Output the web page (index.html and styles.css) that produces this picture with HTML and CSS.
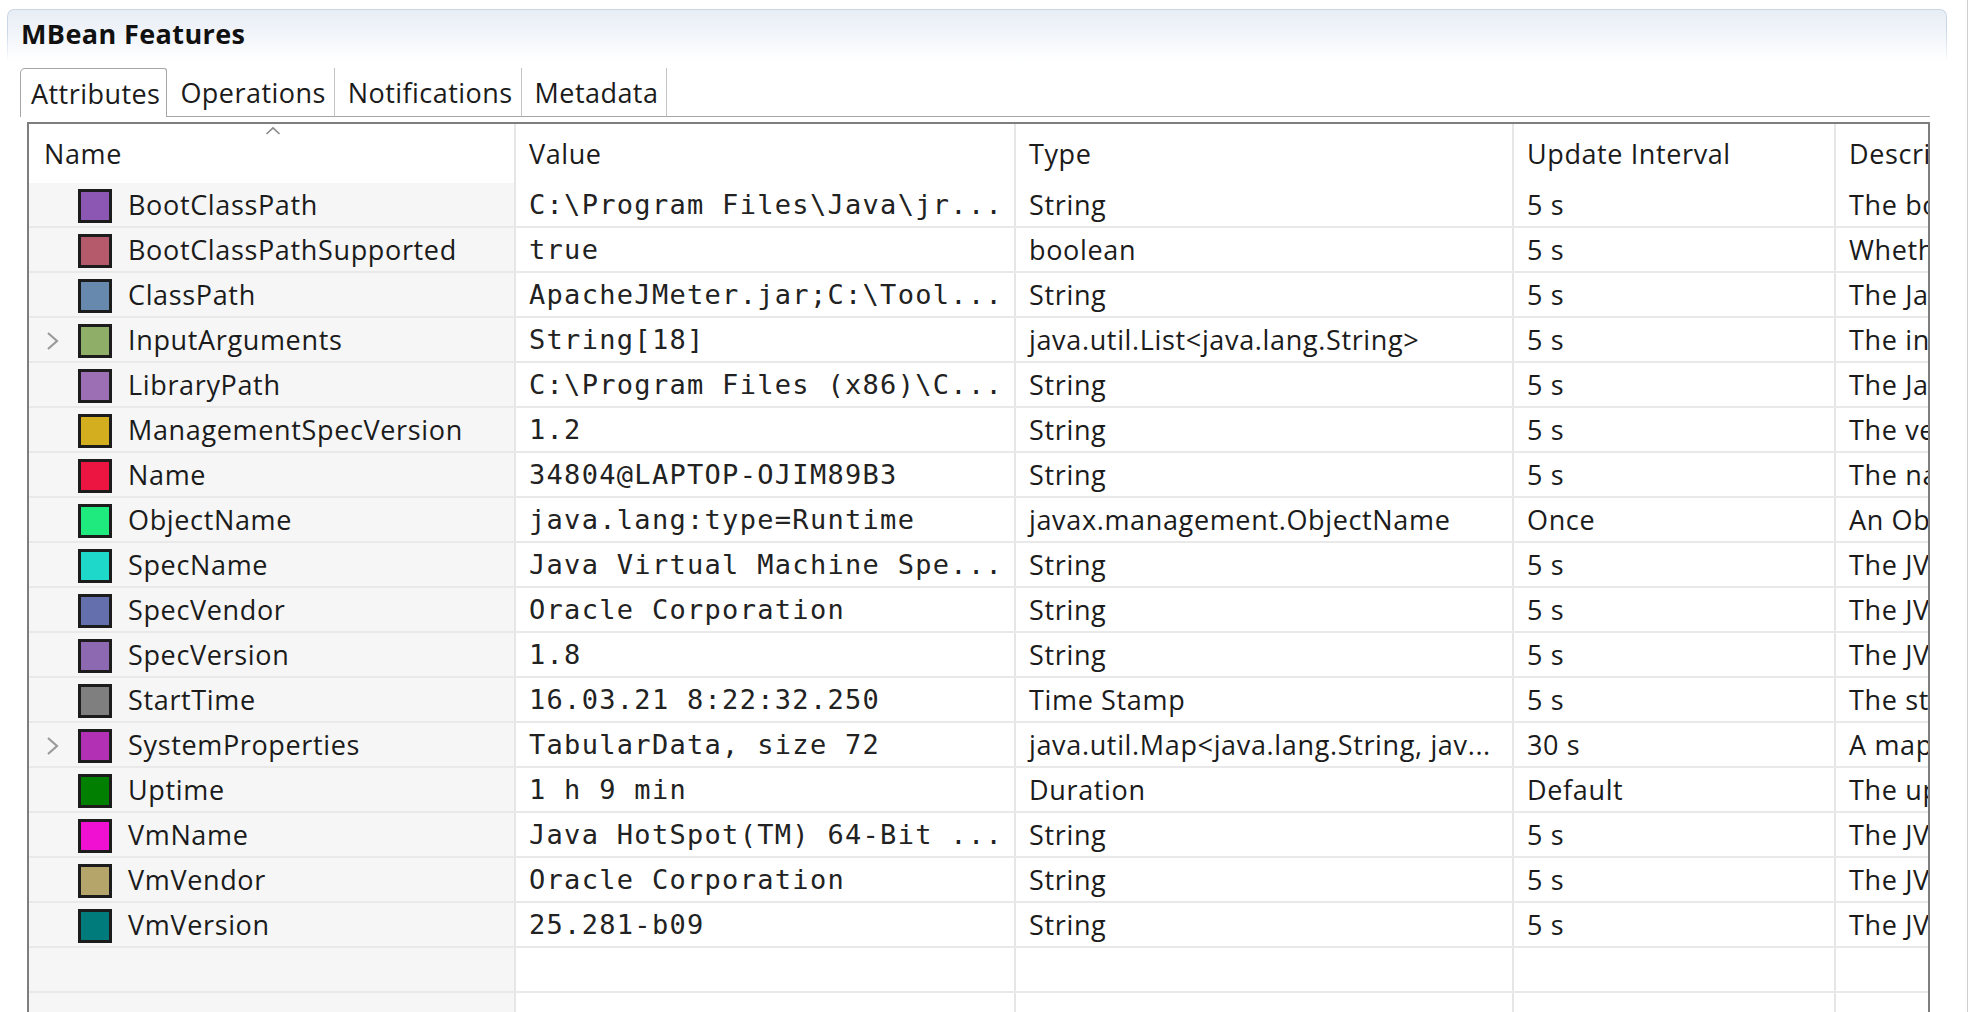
FILE: index.html
```html
<!DOCTYPE html>
<html>
<head>
<meta charset="utf-8">
<link rel="stylesheet" href="styles.css">
</head>
<body>
<div class="window">
  <div class="panel">
    <div class="panel-head"><span class="panel-title">MBean Features</span></div>
    <div class="tabs">
      <div class="tab tab-active">Attributes</div>
      <div class="tab">Operations</div>
      <div class="tab">Notifications</div>
      <div class="tab">Metadata</div>
      <div class="tab-fill"></div>
    </div>
    <div class="grid-wrap">
      <table class="grid">
        <colgroup>
          <col class="c-name"><col class="c-value"><col class="c-type"><col class="c-upd"><col class="c-desc">
        </colgroup>
        <thead>
          <tr>
            <th class="h-name">Name<svg class="sort" width="16" height="9" viewBox="0 0 16 9"><path d="M1.5 8 L8 1.8 L14.5 8" fill="none" stroke="#8a8a8a" stroke-width="1.6"/></svg></th>
            <th>Value</th>
            <th>Type</th>
            <th>Update Interval</th>
            <th>Description</th>
          </tr>
        </thead>
        <tbody>
          <tr><td class="n"><span class="exp"></span><span class="sw" style="background:#8b57b2"></span>BootClassPath</td><td class="v">C:\Program Files\Java\jr...</td><td>String</td><td>5 s</td><td>The boot class path that is used by the bootstrap class loader</td></tr>
          <tr><td class="n"><span class="exp"></span><span class="sw" style="background:#b45a6b"></span>BootClassPathSupported</td><td class="v">true</td><td>boolean</td><td>5 s</td><td>Whether the Java virtual machine supports the boot class path</td></tr>
          <tr><td class="n"><span class="exp"></span><span class="sw" style="background:#6889ae"></span>ClassPath</td><td class="v">ApacheJMeter.jar;C:\Tool...</td><td>String</td><td>5 s</td><td>The Java class path</td></tr>
          <tr><td class="n"><span class="exp"><svg width="14" height="22" viewBox="0 0 14 22"><path d="M2 3 L11 11 L2 19" fill="none" stroke="#9a9a9a" stroke-width="2.2"/></svg></span><span class="sw" style="background:#8fae67"></span>InputArguments</td><td class="v">String[18]</td><td>java.util.List&lt;java.lang.String&gt;</td><td>5 s</td><td>The input arguments passed to the JVM</td></tr>
          <tr><td class="n"><span class="exp"></span><span class="sw" style="background:#9c6fb5"></span>LibraryPath</td><td class="v">C:\Program Files (x86)\C...</td><td>String</td><td>5 s</td><td>The Java library path</td></tr>
          <tr><td class="n"><span class="exp"></span><span class="sw" style="background:#d3ae1f"></span>ManagementSpecVersion</td><td class="v">1.2</td><td>String</td><td>5 s</td><td>The version of the management interface</td></tr>
          <tr><td class="n"><span class="exp"></span><span class="sw" style="background:#ec1440"></span>Name</td><td class="v">34804@LAPTOP-OJIM89B3</td><td>String</td><td>5 s</td><td>The name representing the running JVM</td></tr>
          <tr><td class="n"><span class="exp"></span><span class="sw" style="background:#1eea7e"></span>ObjectName</td><td class="v">java.lang:type=Runtime</td><td>javax.management.ObjectName</td><td>Once</td><td>An ObjectName for this MBean</td></tr>
          <tr><td class="n"><span class="exp"></span><span class="sw" style="background:#1ed9c9"></span>SpecName</td><td class="v">Java Virtual Machine Spe...</td><td>String</td><td>5 s</td><td>The JVM specification name</td></tr>
          <tr><td class="n"><span class="exp"></span><span class="sw" style="background:#6470ae"></span>SpecVendor</td><td class="v">Oracle Corporation</td><td>String</td><td>5 s</td><td>The JVM specification vendor</td></tr>
          <tr><td class="n"><span class="exp"></span><span class="sw" style="background:#8c69b0"></span>SpecVersion</td><td class="v">1.8</td><td>String</td><td>5 s</td><td>The JVM specification version</td></tr>
          <tr><td class="n"><span class="exp"></span><span class="sw" style="background:#7f7f7f"></span>StartTime</td><td class="v">16.03.21 8:22:32.250</td><td>Time Stamp</td><td>5 s</td><td>The start time of the JVM</td></tr>
          <tr><td class="n"><span class="exp"><svg width="14" height="22" viewBox="0 0 14 22"><path d="M2 3 L11 11 L2 19" fill="none" stroke="#9a9a9a" stroke-width="2.2"/></svg></span><span class="sw" style="background:#b130b3"></span>SystemProperties</td><td class="v">TabularData, size 72</td><td>java.util.Map&lt;java.lang.String, jav...</td><td>30 s</td><td>A map of names and values of all system properties</td></tr>
          <tr><td class="n"><span class="exp"></span><span class="sw" style="background:#007f00"></span>Uptime</td><td class="v">1 h 9 min</td><td>Duration</td><td>Default</td><td>The uptime of the JVM</td></tr>
          <tr><td class="n"><span class="exp"></span><span class="sw" style="background:#f010d2"></span>VmName</td><td class="v">Java HotSpot(TM) 64-Bit ...</td><td>String</td><td>5 s</td><td>The JVM implementation name</td></tr>
          <tr><td class="n"><span class="exp"></span><span class="sw" style="background:#b5a56a"></span>VmVendor</td><td class="v">Oracle Corporation</td><td>String</td><td>5 s</td><td>The JVM implementation vendor</td></tr>
          <tr><td class="n"><span class="exp"></span><span class="sw" style="background:#007b7b"></span>VmVersion</td><td class="v">25.281-b09</td><td>String</td><td>5 s</td><td>The JVM implementation version</td></tr>
          <tr class="empty"><td class="n"></td><td></td><td></td><td></td><td></td></tr>
          <tr class="empty"><td class="n"></td><td></td><td></td><td></td><td></td></tr>
        </tbody>
      </table>
    </div>
  </div>
</div>
</body>
</html>
```
FILE: styles.css
```css
html, body {
  margin: 0;
  padding: 0;
  background: #ffffff;
}
body {
  font-family: "Open Sans", "Noto Sans", sans-serif;
  color: #1b1b1b;
}
.window {
  width: 1968px;
  height: 1012px;
  overflow: hidden;
  border-right: 1px solid #cfcfcf;
  padding-top: 9px;
  box-sizing: border-box;
}
.panel {
  margin-left: 7px;
  width: 1940px;
}
.panel-head {
  position: relative;
  height: 52px;
  background: linear-gradient(#e7edf5 0%, #f4f7fb 60%, #ffffff 100%);
  border-radius: 7px 7px 0 0;
  display: flex;
  align-items: center;
  padding-left: 14px;
}
.panel-head::before {
  content: "";
  position: absolute;
  inset: 0;
  border: 1.5px solid #c9d6e6;
  border-bottom: none;
  border-radius: 7px 7px 0 0;
  -webkit-mask-image: linear-gradient(#000 40%, transparent 100%);
  mask-image: linear-gradient(#000 40%, transparent 100%);
}
.panel-title {
  font-weight: 700;
  font-size: 27px;
  letter-spacing: 0.4px;
  color: #111;
  margin-top: -4px;
}
.tabs {
  display: flex;
  margin-left: 13px;
  margin-top: 7px;
  height: 49px;
  width: 1910px;
}
.tab {
  font-size: 27px;
  padding: 0 8px 0 13px;
  display: flex;
  align-items: center;
  border-right: 1px solid #c4c4c4;
  border-bottom: 1.5px solid #a6a6a6;
  white-space: nowrap;
  letter-spacing: 0.45px;
}
.tab-active {
  border: 1.5px solid #a6a6a6;
  border-bottom: none;
  border-radius: 5px 3px 0 0;
  padding-left: 10px;
  padding-right: 6px;
}
.tab-fill {
  flex: 1;
  border-bottom: 1.5px solid #a6a6a6;
}
.grid-wrap {
  margin-left: 20px;
  margin-top: 5px;
  width: 1903px;
  height: 900px;
  box-sizing: border-box;
  border: 2px solid #7e7e7e;
  border-bottom: none;
  overflow: hidden;
}
.grid {
  table-layout: fixed;
  border-collapse: collapse;
  width: 2100px;
}
.c-name { width: 486px; }
.c-value { width: 500px; }
.c-type { width: 498px; }
.c-upd { width: 322px; }
.c-desc { width: 294px; }
.grid th {
  height: 59px;
  padding: 0 0 0 13px;
  text-align: left;
  font-weight: 400;
  font-size: 27px;
  letter-spacing: 0.6px;
  border-right: 2px solid #e6e6e6;
  position: relative;
  white-space: nowrap;
  overflow: hidden;
}
.grid th.h-name {
  padding-left: 15px;
}
.sort {
  position: absolute;
  left: 236px;
  top: 2px;
}
.grid td {
  height: 43px;
  padding: 0 0 0 13px;
  border-right: 2px solid #e6e6e6;
  border-bottom: 2px solid #e9e9e9;
  font-size: 27px;
  letter-spacing: 0.65px;
  white-space: nowrap;
  overflow: hidden;
}
.grid td.n {
  background: #f6f6f6;
  padding-left: 17px;
}
.grid td.v {
  font-family: "DejaVu Sans Mono", "Liberation Mono", monospace;
  font-size: 27px;
  letter-spacing: 1.3px;
  color: #222;
}
.exp {
  display: inline-block;
  width: 14px;
  height: 22px;
  vertical-align: middle;
  margin-right: 18px;
  margin-top: -3px;
}
.exp svg { display: block; }
.sw {
  display: inline-block;
  width: 28px;
  height: 28px;
  border: 3px solid #1c1c1c;
  vertical-align: middle;
  margin-right: 16px;
  margin-top: -4px;
}
.empty td { height: 43px; }
```
